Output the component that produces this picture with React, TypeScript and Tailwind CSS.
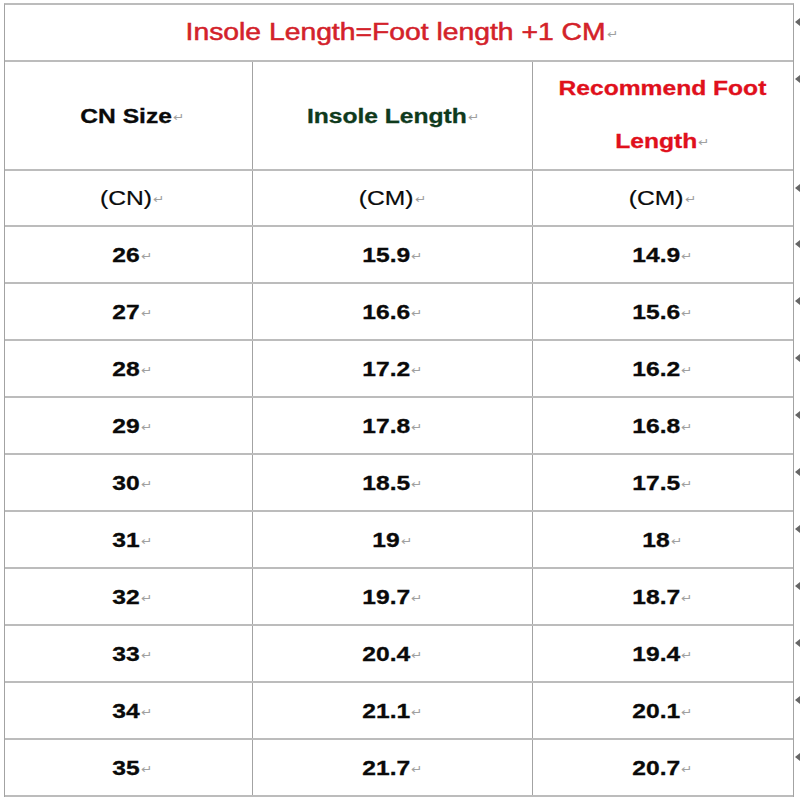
const rows: [string, string, string][] = [
  ['26', '15.9', '14.9'],
  ['27', '16.6', '15.6'],
  ['28', '17.2', '16.2'],
  ['29', '17.8', '16.8'],
  ['30', '18.5', '17.5'],
  ['31', '19', '18'],
  ['32', '19.7', '18.7'],
  ['33', '20.4', '19.4'],
  ['34', '21.1', '20.1'],
  ['35', '21.7', '20.7'],
];

function Ret() {
  return <span className="ml-[1px] align-middle text-[11px] font-normal text-[#a0a0a0] [-webkit-text-stroke:0px]">↵</span>;
}

function Txt({ children, className = '' }: { children: React.ReactNode; className?: string }) {
  return (
    <span className={`inline-block origin-center scale-x-[1.23] whitespace-nowrap ${className}`}>
      {children}
      <Ret />
    </span>
  );
}

function Marker() {
  return (
    <span className="absolute left-[calc(100%+2px)] top-[13px] h-0 w-0 border-y-[4px] border-r-[5px] border-y-transparent border-r-[#666]" />
  );
}

function Cell({ w, children, last }: { w: string; children: React.ReactNode; last?: boolean }) {
  return (
    <div className={`${w} flex items-center justify-center ${last ? '' : 'border-r border-r-[#a3a3a3]'}`}>
      {children}
    </div>
  );
}

function Row({ h, cells, bold = true }: { h: string; cells: React.ReactNode[]; bold?: boolean }) {
  const b = bold ? 'font-bold [-webkit-text-stroke:0.3px]' : '[-webkit-text-stroke:0.2px]';
  return (
    <div className={`relative flex ${h} border-b-2 border-b-[#bcbcbc]`}>
      <Cell w="w-[248px]"><Txt className={`${b} translate-x-[4px]`}>{cells[0]}</Txt></Cell>
      <Cell w="w-[280px]"><Txt className={b}>{cells[1]}</Txt></Cell>
      <Cell w="w-[259px]" last><Txt className={b}>{cells[2]}</Txt></Cell>
      <Marker />
    </div>
  );
}

export default function App() {
  return (
    <div className="h-[800px] w-[800px] bg-white pl-[4px] pt-[3px] text-[20px] text-[#0a0a0a] [font-family:'Liberation_Sans',Arial,sans-serif]">
      <div className="w-[790px] border-x border-t-2 border-x-[#a3a3a3] border-t-[#bcbcbc]">
        <div className="relative flex h-[57px] items-center justify-center border-b-2 border-b-[#bcbcbc]">
          <Txt className="translate-x-[3px] text-[23px] text-[#d3222a] [-webkit-text-stroke:0.5px]">Insole Length=Foot length +1 CM</Txt>
          <Marker />
        </div>
        <div className="relative flex h-[109px] border-b-2 border-b-[#bcbcbc]">
          <Cell w="w-[248px]"><Txt className="translate-x-[4px] font-bold [-webkit-text-stroke:0.3px]">CN Size</Txt></Cell>
          <Cell w="w-[280px]"><Txt className="font-bold text-[#0f3a1c] [-webkit-text-stroke:0.3px]">Insole Length</Txt></Cell>
          <Cell w="w-[259px]" last>
            <div className="flex flex-col items-center leading-[53px] font-bold text-[#e0101c] [-webkit-text-stroke:0.3px]">
              <span className="inline-block scale-x-[1.23] whitespace-nowrap">Recommend Foot</span>
              <Txt>Length</Txt>
            </div>
          </Cell>
          <Marker />
        </div>
        <Row h="h-[56px]" cells={['(CN)', '(CM)', '(CM)']} bold={false} />
        {rows.map((r) => (
          <Row key={r[0]} h="h-[57px]" cells={r} />
        ))}
      </div>
    </div>
  );
}
